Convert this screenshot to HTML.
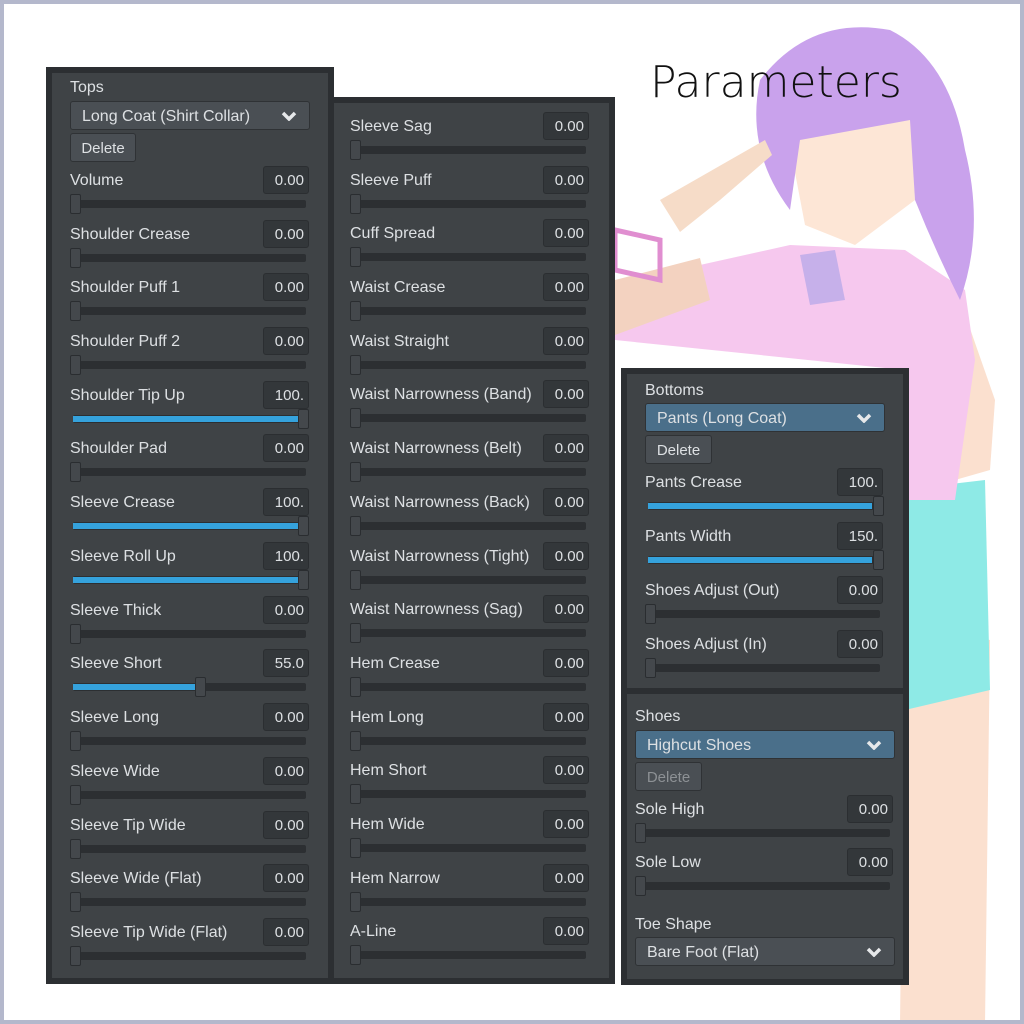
<!DOCTYPE html>
<html><head><meta charset="utf-8"><style>
*{margin:0;padding:0;box-sizing:border-box}
body{width:1024px;height:1024px;position:relative;overflow:hidden;background:#fff;font-family:"Liberation Sans","DejaVu Sans",sans-serif;}
.frame{position:absolute;left:0;top:0;width:1024px;height:1024px;border:4px solid #b4b8cc;z-index:10;pointer-events:none}
.panel{position:absolute;background:#3f4346;border:6px solid #2c2f32}
.r{position:absolute;height:54px}
.l{position:absolute;left:0;top:4px;color:#dde0e3;font-size:16px;line-height:22px;white-space:nowrap}
.v{position:absolute;right:0;top:0;width:46px;height:28px;background:#33373a;border:1px solid #2b2e31;border-radius:3px;color:#dde0e3;font-size:15px;line-height:28px;text-align:right;padding-right:4px}
.t{position:absolute;left:3px;right:3px;top:34px;height:8px;background:#2c2f32;border-radius:2px}
.f{position:absolute;left:0;top:1px;height:6px;background:#35a2dc}
.th{position:absolute;top:28px;width:11px;height:20px;background:#44484c;border:1px solid #2a2d30;border-radius:2px}
.dd{position:absolute;height:29px;background:#4a4f54;border:1px solid #2f3235;border-radius:3px;color:#dde0e3;font-size:16px;line-height:29px;padding-left:11px}
.dd.sel{background:#4a6f8a}
.dd svg{position:absolute;right:12px;top:9px}
.btn{position:absolute;height:29px;background:#4a4f54;border:1px solid #2f3235;border-radius:3px;color:#dde0e3;font-size:15px;line-height:29px;text-align:center}
.hd{position:absolute;color:#dde0e3;font-size:16px}
</style></head><body>
<svg width="1024" height="1024" style="position:absolute;left:0;top:0">
<path d="M905 620 L990 640 L985 1024 L900 1024 Z" fill="#fbe0cf"/>
<path d="M900 490 L985 480 L990 690 L905 710 Z" fill="#8eeae6"/>
<path d="M960 300 L995 400 L990 470 L955 480 Z" fill="#fbe0cf"/>
<path d="M615 300 L700 265 L790 245 L905 250 L965 290 L975 360 L955 500 L905 500 L905 370 L615 340 Z" fill="#f6c8ee"/>
<path d="M615 280 L700 258 L710 300 L615 335 Z" fill="#f3d2c0"/>
<path d="M800 255 L835 250 L845 300 L810 305 Z" fill="#c6b0ea"/>
<path d="M785 120 L910 110 L915 200 L855 245 L805 225 Z" fill="#fde6d6"/>
<path d="M760 80 Q810 15 890 30 Q950 60 965 150 Q985 230 960 300 Q935 250 915 200 L910 120 L800 140 L790 210 Q745 150 760 80 Z" fill="#c9a2ec"/>
<path d="M660 200 L765 140 L772 155 L720 200 L680 232 Z" fill="#f6dcc8"/>
<path d="M615 230 L660 240 L660 280 L615 270 Z" fill="none" stroke="#e08ed0" stroke-width="5"/>
<text x="650" y="97" font-family="DejaVu Sans, sans-serif" font-size="44" font-weight="200" fill="#111">Parameters</text>
</svg>

<div class="panel" style="left:46px;top:67px;width:288px;height:917px"></div>
<div class="panel" style="left:328px;top:97px;width:287px;height:887px"></div>
<div class="panel" style="left:621px;top:368px;width:288px;height:326px"></div>
<div class="panel" style="left:621px;top:688px;width:288px;height:297px"></div>

<div class="hd" style="left:70px;top:79px">Tops</div>
<div class="dd" style="left:70px;top:101px;width:240px">Long Coat (Shirt Collar)<svg width="16" height="10"><path d="M2 2 L8 8 L14 2" stroke="#e6e8ea" stroke-width="3.5" fill="none"/></svg></div>
<div class="btn" style="left:70px;top:133px;width:66px">Delete</div>

<div class="r" style="left:70px;top:166px;width:239px"><div class="l">Volume</div><div class="v">0.00</div><div class="t"></div><div class="th" style="left:0"></div></div>
<div class="r" style="left:70px;top:220px;width:239px"><div class="l">Shoulder Crease</div><div class="v">0.00</div><div class="t"></div><div class="th" style="left:0"></div></div>
<div class="r" style="left:70px;top:273px;width:239px"><div class="l">Shoulder Puff 1</div><div class="v">0.00</div><div class="t"></div><div class="th" style="left:0"></div></div>
<div class="r" style="left:70px;top:327px;width:239px"><div class="l">Shoulder Puff 2</div><div class="v">0.00</div><div class="t"></div><div class="th" style="left:0"></div></div>
<div class="r" style="left:70px;top:381px;width:239px"><div class="l">Shoulder Tip Up</div><div class="v">100.</div><div class="t"><div class="f" style="width:225px"></div></div><div class="th" style="left:228px"></div></div>
<div class="r" style="left:70px;top:434px;width:239px"><div class="l">Shoulder Pad</div><div class="v">0.00</div><div class="t"></div><div class="th" style="left:0"></div></div>
<div class="r" style="left:70px;top:488px;width:239px"><div class="l">Sleeve Crease</div><div class="v">100.</div><div class="t"><div class="f" style="width:225px"></div></div><div class="th" style="left:228px"></div></div>
<div class="r" style="left:70px;top:542px;width:239px"><div class="l">Sleeve Roll Up</div><div class="v">100.</div><div class="t"><div class="f" style="width:225px"></div></div><div class="th" style="left:228px"></div></div>
<div class="r" style="left:70px;top:596px;width:239px"><div class="l">Sleeve Thick</div><div class="v">0.00</div><div class="t"></div><div class="th" style="left:0"></div></div>
<div class="r" style="left:70px;top:649px;width:239px"><div class="l">Sleeve Short</div><div class="v">55.0</div><div class="t"><div class="f" style="width:125px"></div></div><div class="th" style="left:125px"></div></div>
<div class="r" style="left:70px;top:703px;width:239px"><div class="l">Sleeve Long</div><div class="v">0.00</div><div class="t"></div><div class="th" style="left:0"></div></div>
<div class="r" style="left:70px;top:757px;width:239px"><div class="l">Sleeve Wide</div><div class="v">0.00</div><div class="t"></div><div class="th" style="left:0"></div></div>
<div class="r" style="left:70px;top:811px;width:239px"><div class="l">Sleeve Tip Wide</div><div class="v">0.00</div><div class="t"></div><div class="th" style="left:0"></div></div>
<div class="r" style="left:70px;top:864px;width:239px"><div class="l">Sleeve Wide (Flat)</div><div class="v">0.00</div><div class="t"></div><div class="th" style="left:0"></div></div>
<div class="r" style="left:70px;top:918px;width:239px"><div class="l">Sleeve Tip Wide (Flat)</div><div class="v">0.00</div><div class="t"></div><div class="th" style="left:0"></div></div>

<div class="r" style="left:350px;top:112px;width:239px"><div class="l">Sleeve Sag</div><div class="v">0.00</div><div class="t"></div><div class="th" style="left:0"></div></div>
<div class="r" style="left:350px;top:166px;width:239px"><div class="l">Sleeve Puff</div><div class="v">0.00</div><div class="t"></div><div class="th" style="left:0"></div></div>
<div class="r" style="left:350px;top:219px;width:239px"><div class="l">Cuff Spread</div><div class="v">0.00</div><div class="t"></div><div class="th" style="left:0"></div></div>
<div class="r" style="left:350px;top:273px;width:239px"><div class="l">Waist Crease</div><div class="v">0.00</div><div class="t"></div><div class="th" style="left:0"></div></div>
<div class="r" style="left:350px;top:327px;width:239px"><div class="l">Waist Straight</div><div class="v">0.00</div><div class="t"></div><div class="th" style="left:0"></div></div>
<div class="r" style="left:350px;top:380px;width:239px"><div class="l">Waist Narrowness (Band)</div><div class="v">0.00</div><div class="t"></div><div class="th" style="left:0"></div></div>
<div class="r" style="left:350px;top:434px;width:239px"><div class="l">Waist Narrowness (Belt)</div><div class="v">0.00</div><div class="t"></div><div class="th" style="left:0"></div></div>
<div class="r" style="left:350px;top:488px;width:239px"><div class="l">Waist Narrowness (Back)</div><div class="v">0.00</div><div class="t"></div><div class="th" style="left:0"></div></div>
<div class="r" style="left:350px;top:542px;width:239px"><div class="l">Waist Narrowness (Tight)</div><div class="v">0.00</div><div class="t"></div><div class="th" style="left:0"></div></div>
<div class="r" style="left:350px;top:595px;width:239px"><div class="l">Waist Narrowness (Sag)</div><div class="v">0.00</div><div class="t"></div><div class="th" style="left:0"></div></div>
<div class="r" style="left:350px;top:649px;width:239px"><div class="l">Hem Crease</div><div class="v">0.00</div><div class="t"></div><div class="th" style="left:0"></div></div>
<div class="r" style="left:350px;top:703px;width:239px"><div class="l">Hem Long</div><div class="v">0.00</div><div class="t"></div><div class="th" style="left:0"></div></div>
<div class="r" style="left:350px;top:756px;width:239px"><div class="l">Hem Short</div><div class="v">0.00</div><div class="t"></div><div class="th" style="left:0"></div></div>
<div class="r" style="left:350px;top:810px;width:239px"><div class="l">Hem Wide</div><div class="v">0.00</div><div class="t"></div><div class="th" style="left:0"></div></div>
<div class="r" style="left:350px;top:864px;width:239px"><div class="l">Hem Narrow</div><div class="v">0.00</div><div class="t"></div><div class="th" style="left:0"></div></div>
<div class="r" style="left:350px;top:917px;width:239px"><div class="l">A-Line</div><div class="v">0.00</div><div class="t"></div><div class="th" style="left:0"></div></div>

<div class="hd" style="left:645px;top:382px">Bottoms</div>
<div class="dd sel" style="left:645px;top:403px;width:240px">Pants (Long Coat)<svg width="16" height="10"><path d="M2 2 L8 8 L14 2" stroke="#e6e8ea" stroke-width="3.5" fill="none"/></svg></div>
<div class="btn" style="left:645px;top:435px;width:67px">Delete</div>
<div class="r" style="left:645px;top:468px;width:238px"><div class="l">Pants Crease</div><div class="v">100.</div><div class="t"><div class="f" style="width:224px"></div></div><div class="th" style="left:228px"></div></div>
<div class="r" style="left:645px;top:522px;width:238px"><div class="l">Pants Width</div><div class="v">150.</div><div class="t"><div class="f" style="width:224px"></div></div><div class="th" style="left:228px"></div></div>
<div class="r" style="left:645px;top:576px;width:238px"><div class="l">Shoes Adjust (Out)</div><div class="v">0.00</div><div class="t"></div><div class="th" style="left:0"></div></div>
<div class="r" style="left:645px;top:630px;width:238px"><div class="l">Shoes Adjust (In)</div><div class="v">0.00</div><div class="t"></div><div class="th" style="left:0"></div></div>

<div class="hd" style="left:635px;top:708px">Shoes</div>
<div class="dd sel" style="left:635px;top:730px;width:260px">Highcut Shoes<svg width="16" height="10"><path d="M2 2 L8 8 L14 2" stroke="#e6e8ea" stroke-width="3.5" fill="none"/></svg></div>
<div class="btn" style="left:635px;top:762px;width:67px;color:#8d9195">Delete</div>
<div class="r" style="left:635px;top:795px;width:258px"><div class="l">Sole High</div><div class="v">0.00</div><div class="t"></div><div class="th" style="left:0"></div></div>
<div class="r" style="left:635px;top:848px;width:258px"><div class="l">Sole Low</div><div class="v">0.00</div><div class="t"></div><div class="th" style="left:0"></div></div>
<div class="hd" style="left:635px;top:916px">Toe Shape</div>
<div class="dd" style="left:635px;top:937px;width:260px">Bare Foot (Flat)<svg width="16" height="10"><path d="M2 2 L8 8 L14 2" stroke="#e6e8ea" stroke-width="3.5" fill="none"/></svg></div>

<div class="frame"></div>
</body></html>
